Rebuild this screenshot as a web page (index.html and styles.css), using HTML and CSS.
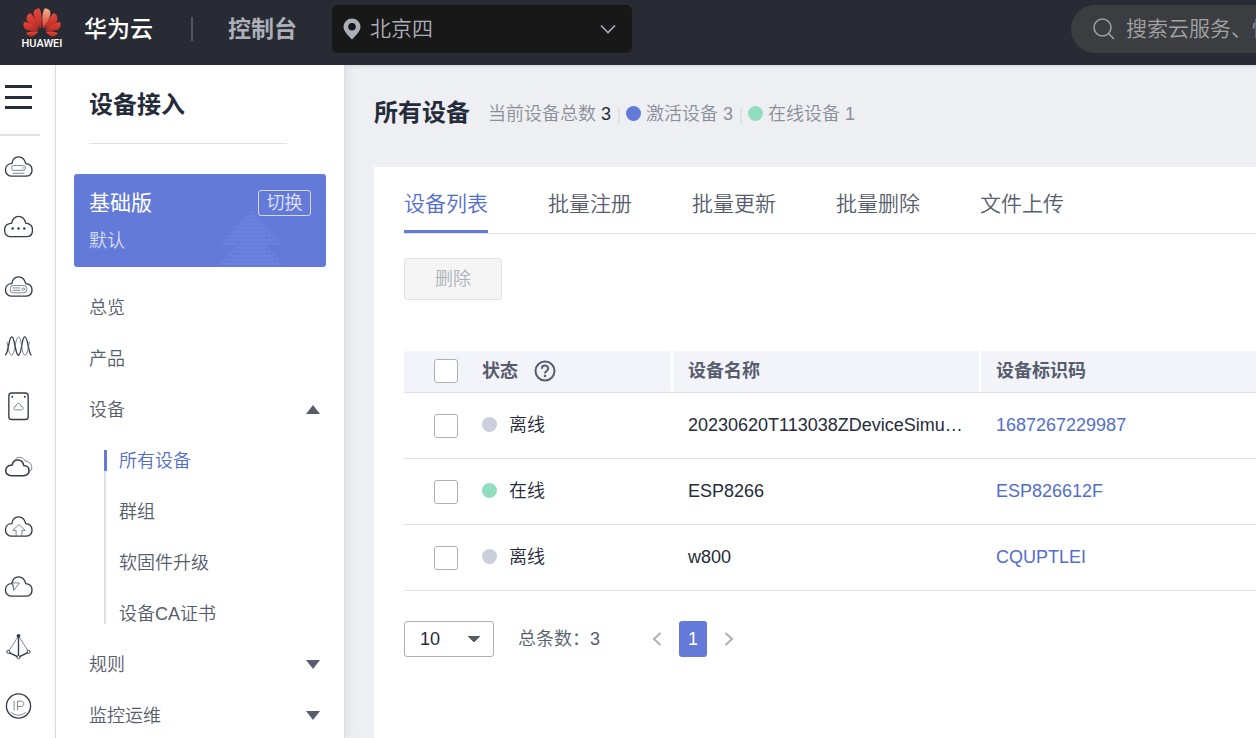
FILE: index.html
```html
<!DOCTYPE html>
<html lang="zh-CN">
<head>
<meta charset="utf-8">
<meta name="viewport" content="width=device-width, initial-scale=1">
<title>设备接入 - 所有设备</title>
<link rel="stylesheet" href="styles.css">
</head>
<body>
<svg class="defs" aria-hidden="true">
  <defs>
    <path id="cloud" d="M8 26H22C27 26 29 23 29 19.500C29 15.500 26 13 22.500 13C21.500 9 18.500 6 15 6C11.500 6 8.800 9 8 13C4 13 1.500 15.800 1.500 19.500C1.500 23.500 4.500 26 8 26Z"/>
    <linearGradient id="petal" x1="0" y1="0" x2="0" y2="1"><stop offset="0" stop-color="#e8473a"/><stop offset="1" stop-color="#b92b22"/></linearGradient>
    <linearGradient id="petal-light" x1="0" y1="0" x2="0" y2="1"><stop offset="0" stop-color="#f3b28d"/><stop offset="1" stop-color="#dc3529"/></linearGradient>
    <g id="petals">
      <path d="M50 64C44 45 32 25 22 15C12 18 8 28 11 38C18 50 36 60 50 64Z"/>
      <path d="M47 69C35 55 18 44 3 42C-2 52 1 62 11 67C23 70 38 70 47 69Z"/>
      <path d="M46 73C32 70 18 72 9 76C14 86 24 89 32 84C38 80 42 76 46 73Z"/>
    </g>
  </defs>
</svg>

<header class="topbar">
  <a class="brand" href="#">
    <span class="mark">
      <svg viewBox="0 0 114 88" width="38" height="29" aria-hidden="true">
        <g fill="url(#petal)"><use href="#petals"/><use href="#petals" transform="translate(114 0) scale(-1 1)"/>
        <path d="M54 62C58 35 56 10 48 1C36 2 29 10 32 22C36 38 46 52 54 62Z"/></g>
        <path fill="url(#petal-light)" d="M60 62C56 35 58 10 66 1C78 2 85 10 82 22C78 38 68 52 60 62Z"/>
      </svg>
      <span class="mark-name">HUAWEI</span>
    </span>
    <span class="brand-name">华为云</span>
  </a>
  <span class="topbar-rule"></span>
  <a class="console" href="#">控制台</a>
  <button class="region" type="button">
    <svg width="18" height="22" viewBox="0 0 18 22" aria-hidden="true"><path fill="#adb0b8" fill-rule="evenodd" d="M9 0.500A8.500 8.500 0 0 0 0.500 9C0.500 13.500 6 18 9 21.500C12 18 17.500 13.500 17.500 9A8.500 8.500 0 0 0 9 0.500ZM9 5A3.800 3.800 0 1 1 9 12.600A3.800 3.800 0 0 1 9 5Z"/></svg>
    <span class="region-name">北京四</span>
    <svg width="16" height="10" viewBox="0 0 16 10" aria-hidden="true"><path fill="none" stroke="#adb0b8" stroke-width="1.600" d="M1 1.500L8 8.500L15 1.500"/></svg>
  </button>
  <label class="search">
    <svg width="22" height="22" viewBox="0 0 22 22" aria-hidden="true"><g fill="none" stroke="#a2a3a6" stroke-width="1.500"><circle cx="9.500" cy="9.500" r="8.500"/><path d="M15.500 15.500L21 21"/></g></svg>
    <input class="search-input" type="text" placeholder="搜索云服务、快" aria-label="搜索">
  </label>
</header>

<div class="shell">
  <nav class="rail" aria-label="服务">
    <button class="menu" type="button" aria-label="菜单"><span class="bar"></span><span class="bar"></span><span class="bar"></span></button>
    <a class="rail-link" href="#" aria-label="云服务器"><svg class="rail-icon" viewBox="0 0 30 32"><use href="#cloud"/><g class="thin"><rect x="8" y="15" width="14" height="5" rx="2"/><path d="M9 23H21M19 17.500H21"/></g></svg></a>
    <a class="rail-link" href="#" aria-label="更多云"><svg class="rail-icon" viewBox="0 0 30 32"><path d="M7 26.500H23C27.500 26.500 29.500 23.500 29.500 19.500C29.500 15.500 27 13 22.500 12.500C21.500 8.500 18.500 5.500 15 5.500C11.500 5.500 8.500 8.500 8 12.500C3 13 0.600 15.500 0.600 19.500C0.600 24 3 26.500 7 26.500Z"/><g class="solid"><circle cx="9" cy="18" r="1.300"/><circle cx="15" cy="18" r="1.300"/><circle cx="21" cy="18" r="1.300"/></g></svg></a>
    <a class="rail-link" href="#" aria-label="主机"><svg class="rail-icon" viewBox="0 0 30 32"><use href="#cloud"/><g class="thin"><rect x="6.500" y="15" width="17" height="7.500" rx="3"/><path d="M9 17.500H17M9 20H17"/><circle cx="20" cy="18.800" r="1.300"/></g></svg></a>
    <a class="rail-link" href="#" aria-label="弹性伸缩"><svg class="rail-icon" viewBox="0 0 30 32"><path d="M1 25C5 24 4.500 6 8 6C11.500 6 11.500 25 15 25C18.500 25 18 6 21.500 6C25 6 25 24 28.500 25"/><path class="thin" d="M3 11C4.500 17 5 25 8 25C11.500 25 11.500 6 15 6C18.500 6 18 25 21.500 25C24.500 25 24.500 17 26.500 11"/></svg></a>
    <a class="rail-link" href="#" aria-label="存储"><svg class="rail-icon" viewBox="0 0 30 32"><rect x="5" y="2" width="20" height="27.500" rx="3"/><path class="thin" d="M12 19.500H18C20.500 19.500 20.500 16 17.500 15.800C17 11.500 12.800 11.500 12.300 15.800C9.500 16 9.500 19.500 12 19.500Z"/><g class="solid"><circle cx="8.500" cy="6" r="1"/><circle cx="21.500" cy="6" r="1"/></g></svg></a>
    <a class="rail-link" href="#" aria-label="多云"><svg class="rail-icon" viewBox="0 0 30 32"><path class="thin" d="M12 8C15 5.500 20 6 22 10.500C29 10.500 31 19 26 22"/><path d="M7.500 25.500H20C28 25.500 27.500 15 20.500 15C19 7.500 9.500 7.500 8.500 14.500C-0.500 15 0 25.500 7.500 25.500Z" stroke-width="1.600"/></svg></a>
    <a class="rail-link" href="#" aria-label="上传"><svg class="rail-icon" viewBox="0 0 30 32"><use href="#cloud"/><path class="thin" d="M12.500 26V20H9L15.500 14L22 20H18.500V26"/></svg></a>
    <a class="rail-link" href="#" aria-label="云导航"><svg class="rail-icon" viewBox="0 0 30 32"><use href="#cloud"/><path class="thin" d="M9 12L16 12.500L10 20ZM8 11L10.500 19"/></svg></a>
    <a class="rail-link" href="#" aria-label="网络"><svg class="rail-icon" viewBox="0 0 30 32"><path d="M15 5V27M5 22L15 27L25 22"/><path class="thin" d="M15 5L4.500 21.500M15 5L25.500 21.500"/><circle class="solid" cx="15" cy="5" r="2"/><g fill="#fff" stroke-width="1"><circle cx="4.500" cy="21.500" r="1.600"/><circle cx="25.500" cy="21.500" r="1.600"/><circle cx="15" cy="27" r="1.600"/></g></svg></a>
    <a class="rail-link" href="#" aria-label="弹性公网IP"><svg class="rail-icon" viewBox="0 0 30 32"><circle cx="15" cy="15.500" r="12.500"/><path class="thin" d="M7.500 22C12 26 18 26 22.500 22M10.500 10V20M14 20V10.500H17.500C21.500 10.500 21.500 16 17.500 16H14"/></svg></a>
  </nav>

  <aside class="side">
    <h2 class="side-title">设备接入</h2>
    <section class="edition">
      <div class="edition-top"><strong class="edition-name">基础版</strong><button class="switch" type="button">切换</button></div>
      <span class="edition-sub">默认</span>
      <span class="edition-art"></span>
    </section>
    <ul class="menu-list">
      <li><a class="menu-item" href="#">总览</a></li>
      <li><a class="menu-item" href="#">产品</a></li>
      <li><a class="menu-item" href="#">设备<span class="arrow arrow-up"></span></a>
        <ul class="submenu">
          <li><a class="sub-item active" href="#">所有设备</a></li>
          <li><a class="sub-item" href="#">群组</a></li>
          <li><a class="sub-item" href="#">软固件升级</a></li>
          <li><a class="sub-item" href="#">设备CA证书</a></li>
        </ul>
      </li>
      <li><a class="menu-item" href="#">规则<span class="arrow"></span></a></li>
      <li><a class="menu-item" href="#">监控运维<span class="arrow"></span></a></li>
    </ul>
  </aside>

  <main class="main">
    <div class="heading">
      <h1 class="title">所有设备</h1>
      <div class="stats">
        <span class="stat">当前设备总数 <b class="total">3</b></span>
        <span class="stat"><i class="dot blue"></i>激活设备 3</span>
        <span class="stat"><i class="dot green"></i>在线设备 1</span>
      </div>
    </div>
    <section class="panel">
      <nav class="tabs">
        <a class="tab current" href="#">设备列表</a>
        <a class="tab" href="#">批量注册</a>
        <a class="tab" href="#">批量更新</a>
        <a class="tab" href="#">批量删除</a>
        <a class="tab" href="#">文件上传</a>
      </nav>
      <button class="delete" type="button" disabled>删除</button>
      <table class="devices">
        <colgroup><col class="col-check"><col class="col-state"><col class="col-name"><col></colgroup>
        <thead>
          <tr>
            <th class="check-cell"><input class="check" type="checkbox" aria-label="全选"></th>
            <th class="split"><span class="state">状态<svg class="help" width="22" height="22" viewBox="0 0 22 22" aria-hidden="true"><g fill="none" stroke="#575d6c" stroke-width="2"><circle cx="11" cy="11" r="9.500"/><path d="M7.800 8.800C7.800 4.500 14.200 4.500 14.200 8.500C14.200 11 11 11 11 13.500"/></g><circle cx="11" cy="16" r="1.300" fill="#575d6c"/></svg></span></th>
            <th class="split">设备名称</th>
            <th>设备标识码</th>
          </tr>
        </thead>
        <tbody>
          <tr>
            <td class="check-cell"><input class="check" type="checkbox" aria-label="选择 20230620T113038ZDeviceSimu"></td>
            <td><span class="state"><i class="dot gray"></i>离线</span></td>
            <td>20230620T113038ZDeviceSimu…</td>
            <td><a class="code" href="#">1687267229987</a></td>
          </tr>
          <tr>
            <td class="check-cell"><input class="check" type="checkbox" aria-label="选择 ESP8266"></td>
            <td><span class="state"><i class="dot green"></i>在线</span></td>
            <td>ESP8266</td>
            <td><a class="code" href="#">ESP826612F</a></td>
          </tr>
          <tr>
            <td class="check-cell"><input class="check" type="checkbox" aria-label="选择 w800"></td>
            <td><span class="state"><i class="dot gray"></i>离线</span></td>
            <td>w800</td>
            <td><a class="code" href="#">CQUPTLEI</a></td>
          </tr>
        </tbody>
      </table>
      <div class="pager">
        <select class="size" aria-label="每页条数"><option>10</option></select>
        <span class="count">总条数：3</span>
        <div class="pages">
          <button class="step" type="button" aria-label="上一页"><svg width="10" height="14" viewBox="0 0 10 14"><path fill="none" stroke="#adb0b8" stroke-width="2" d="M8.500 1L2 7L8.500 13"/></svg></button>
          <button class="page" type="button" aria-current="page">1</button>
          <button class="step" type="button" aria-label="下一页"><svg width="10" height="14" viewBox="0 0 10 14"><path fill="none" stroke="#adb0b8" stroke-width="2" d="M1.500 1L8 7L1.500 13"/></svg></button>
        </div>
      </div>
    </section>
  </main>
</div>
</body>
</html>
```
FILE: styles.css
```css
* { box-sizing: border-box; }

body {
  margin: 0;
  height: 100vh;
  display: flex;
  flex-direction: column;
  overflow: hidden;
  font-family: "Liberation Sans", "Noto Sans CJK SC", sans-serif;
  font-size: 18px;
  font-weight: 350;
  line-height: 24px;
  color: #252b3a;
  background: #eeeff3;
}

a { color: inherit; text-decoration: none; }
button, input, select { font: inherit; color: inherit; margin: 0; }
button { padding: 0; border: 0; background: none; }
ul { margin: 0; padding: 0; list-style: none; }
.defs { position: absolute; width: 0; height: 0; }

/* Top bar */
.topbar {
  position: relative;
  z-index: 2;
  flex: none;
  display: flex;
  align-items: center;
  height: 65px;
  padding: 0 0 7px 22px;
  overflow: hidden;
  background: #282b33;
  font-size: 21px;
}
.brand { display: flex; align-items: center; gap: 22px; flex: none; }
.mark { display: flex; flex-direction: column; align-items: center; width: 40px; }
.mark-name { font: 500 11px/14px Roboto, sans-serif; color: #fff; }
.brand-name { font-size: 23px; font-weight: 500; color: #fff; }
.topbar-rule { flex: none; width: 2px; height: 24px; margin: 0 35px 0 38px; background: #53565d; }
.console { flex: none; font-size: 23px; font-weight: 700; color: #adb0b8; }
.region {
  flex: none;
  display: flex;
  align-items: center;
  width: 300px;
  height: 48px;
  margin-left: 35px;
  padding: 0 16px 0 11px;
  border-radius: 6px;
  background: #181818;
  color: #adb0b8;
}
.region-name { flex: 1; margin-left: 9px; text-align: left; }
.search {
  flex: none;
  display: flex;
  align-items: center;
  gap: 11px;
  width: 225px;
  height: 48px;
  margin: 0 -40px 0 auto;
  padding-left: 22px;
  border-radius: 24px;
  background: #3c3d41;
}
.search-input { width: 160px; padding: 0; border: 0; outline: 0; background: none; }
.search-input::placeholder { color: #a2a3a6; opacity: 1; }

.shell { flex: 1; display: flex; min-height: 0; }

/* Icon rail */
.rail {
  flex: none;
  display: flex;
  flex-direction: column;
  width: 56px;
  border-right: 1px solid #d9dbe0;
  background: #fff;
}
.menu {
  display: flex;
  flex-direction: column;
  justify-content: space-between;
  width: 40px;
  height: 71px;
  padding: 20px 8px 25px 5px;
  border-bottom: 2px solid #dfe1e6;
}
.bar { height: 3px; background: #252b3a; }
.rail-link { display: flex; align-items: center; height: 60px; padding-left: 4px; }
.rail-icon { width: 29px; height: 31px; fill: none; stroke: #343a48; stroke-width: 1.4; }
.thin { stroke: #5c6270; stroke-width: 0.8; }
.solid { fill: #343a48; stroke: none; }

/* Service menu */
.side { flex: none; width: 289px; padding: 25px 18px 0; background: #fff; border-right: 1px solid #dddee2; box-shadow: 2px 0 8px #dcdde2; z-index: 1; }
.side-title {
  margin: 0 39px 30px 15px;
  padding-bottom: 23px;
  border-bottom: 1px solid #dfe1e6;
  font-size: 24px;
  line-height: 30px;
  font-weight: 700;
}
.edition { position: relative; height: 93px; padding: 16px 15px; border-radius: 3px; background: #637ad9; color: #fff; }
.edition-top { display: flex; justify-content: space-between; align-items: center; height: 26px; margin-bottom: 13px; }
.edition-name { font-size: 21px; font-weight: 400; }
.switch { width: 53px; height: 26px; border: 1px solid #d3d9f5; border-radius: 3px; color: #e0e4f7; line-height: 24px; }
.edition-sub { color: #d6dcf5; }
.edition-art {
  position: absolute;
  right: 43px;
  bottom: 2px;
  width: 64px;
  height: 56px;
  clip-path: polygon(50% 0, 100% 66%, 74% 66%, 100% 100%, 0 100%, 26% 66%, 0 66%);
  background: repeating-linear-gradient(0deg, transparent 0 3px, #637ad9 3px 4px), repeating-linear-gradient(90deg, #6c82dd 0 3px, #637ad9 3px 4px);
}
.menu-list { padding-top: 15px; color: #575d6c; }
.menu-item { display: flex; align-items: center; justify-content: space-between; height: 51px; padding: 0 6px 0 15px; }
.arrow { width: 14px; height: 9px; background: #575d6c; clip-path: polygon(0 0, 100% 0, 50% 100%); }
.arrow-up { clip-path: polygon(50% 0, 100% 100%, 0 100%); }
.submenu {
  margin-left: 30px;
  background: linear-gradient(#dfe1e6, #dfe1e6) 0 15px / 2px 174px no-repeat;
}
.sub-item { display: flex; align-items: center; height: 51px; padding-left: 15px; }
.sub-item.active { color: #526ecc; background: linear-gradient(#637ad9, #637ad9) 0 15px / 3px 21px no-repeat; }

/* Content */
.main { flex: 1; min-width: 0; display: flex; flex-direction: column; padding-left: 29px; background: linear-gradient(#dfe0e4, #eeeff3 5px); }
.heading { display: flex; align-items: center; gap: 18px; height: 102px; padding-bottom: 6px; }
.title { margin: 0; font-size: 24px; font-weight: 700; line-height: 30px; }
.stats { display: flex; align-items: center; padding-top: 1px; color: #8a8e99; }
.stat { display: flex; align-items: center; white-space: pre; }
.stat + .stat { margin-left: 7px; padding-left: 8px; background: linear-gradient(#dfe1e6, #dfe1e6) 0 6px / 2px 16px no-repeat; }
.stat .dot { margin-right: 5px; }
.total { font-weight: 400; color: #252b3a; }
.dot { flex: none; width: 15px; height: 15px; border-radius: 50%; }
.blue { background: #637ad9; }
.green { background: #92dcc0; }
.gray { background: #cacfdb; }

.panel { flex: 1; padding-left: 30px; background: #fff; }
.tabs { display: flex; gap: 60px; height: 67px; border-bottom: 1px solid #dfe1e6; font-size: 21px; color: #575d6c; }
.tab { padding-top: 25px; border-bottom: 3px solid transparent; white-space: nowrap; }
.tab.current { color: #526ecc; border-color: #637ad9; }
.delete { width: 98px; height: 42px; margin-top: 24px; border: 1px solid #dfe1e6; border-radius: 3px; background: #f5f5f6; color: #adb0b8; }

/* Device table */
.devices { width: 100%; margin-top: 51px; table-layout: fixed; border-collapse: separate; border-spacing: 0; }
.col-check { width: 63px; }
.col-state { width: 206px; }
.col-name { width: 308px; }
.devices th, .devices td { padding: 0 15px 2px; border-bottom: 1px solid #dfe1e6; text-align: left; white-space: nowrap; overflow: hidden; text-overflow: ellipsis; }
.devices th { height: 42px; background: #f2f4fa; color: #575d6c; font-weight: 700; }
.devices td { height: 66px; }
.devices .split { background: linear-gradient(#fff, #fff) right / 2px 100% no-repeat #f2f4fa; }
.devices th.check-cell { padding: 0 0 2px 30px; }
.devices td.check-cell { padding: 0 0 0 30px; }
.check { display: block; width: 24px; height: 24px; appearance: none; border: 1px solid #adb0b8; border-radius: 3px; background: #fff; }
.state { display: flex; align-items: center; }
.state .dot { margin-right: 12px; }
.help { margin-left: 16px; }
.code { color: #526ecc; }

/* Pagination */
.pager { display: flex; align-items: center; margin-top: 30px; color: #575d6c; }
.size {
  width: 90px;
  height: 36px;
  padding: 0 15px;
  appearance: none;
  border: 1px solid #adb0b8;
  border-radius: 3px;
  color: #252b3a;
  background: conic-gradient(from -45deg at 50% 100%, #575d6c 90deg, transparent 0) 62px 14px / 14px 7px no-repeat #fff;
}
.count { margin-left: 24px; }
.pages { display: flex; align-items: center; gap: 17px; margin-left: 52px; }
.step { display: flex; }
.page { width: 28px; height: 36px; border-radius: 3px; background: #637ad9; color: #fff; }
```
